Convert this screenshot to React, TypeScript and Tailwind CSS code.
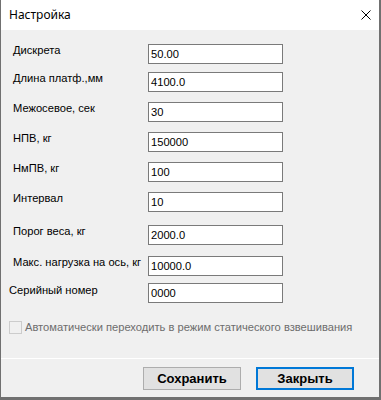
import React from "react";

const font = { fontFamily: '"Liberation Sans", Arial, sans-serif' };

function Field({ label, value }: { label: string; value: string }) {
  return (
    <div className="flex items-start">
      <div className="w-[135px] text-[11.15px] leading-[13px] text-black whitespace-nowrap">{label}</div>
      <div className="w-[135px] h-[20px] border border-[#7a7a7a] bg-white pl-[2px] text-[11.15px] leading-[18px] text-black">
        {value}
      </div>
    </div>
  );
}

export default function App() {
  return (
    <div
      className="w-[381px] h-[400px] bg-[#f0f0f0] border-l border-r-2 border-b-[3px] border-[#707070] flex flex-col overflow-hidden"
      style={font}
    >
      <div className="h-[30px] bg-white flex items-center justify-between pl-[8px] pr-[8px] shrink-0">
        <span className="text-[12px] text-black" style={{ fontFamily: '"Noto Sans", "Open Sans", sans-serif' }}>
          Настройка
        </span>
        <svg width="10" height="10" viewBox="0 0 10 10">
          <path d="M0.5 0.5 L9.5 9.5 M9.5 0.5 L0.5 9.5" stroke="#000" strokeWidth="1" fill="none" />
        </svg>
      </div>
      <div className="h-[328px] shrink-0 pl-[12px] pt-[14px] flex flex-col">
        <Field label="Дискрета" value="50.00" />
        <div className="mt-[8px]"><Field label="Длина платф.,мм" value="4100.0" /></div>
        <div className="mt-[10px]"><Field label="Межосевое, сек" value="30" /></div>
        <div className="mt-[10px]"><Field label="НПВ, кг" value="150000" /></div>
        <div className="mt-[10px]"><Field label="НмПВ, кг" value="100" /></div>
        <div className="mt-[10px]"><Field label="Интервал" value="10" /></div>
        <div className="mt-[13px]"><Field label="Порог веса, кг" value="2000.0" /></div>
        <div className="mt-[11px]"><Field label="Макс. нагрузка на ось, кг" value="10000.0" /></div>
        <div className="mt-[7px] -ml-[4px]">
          <div className="flex items-start">
            <div className="w-[139px] text-[11.15px] leading-[13px] text-black pt-[1px]">Серийный номер</div>
            <div className="w-[135px] h-[20px] border border-[#7a7a7a] bg-white pl-[2px] text-[11.15px] leading-[18px] text-black">
              0000
            </div>
          </div>
        </div>
        <div className="mt-[18px] -ml-[4px] flex items-center">
          <div className="w-[13px] h-[13px] border border-[#cccccc] bg-[#f0f0f0]" />
          <span className="ml-[3px] text-[11.15px] leading-[13px] text-[#6d6d6d] whitespace-nowrap">
            Автоматически переходить в режим статического взвешивания
          </span>
        </div>
      </div>
      <div className="h-[1px] bg-white shrink-0" />
      <div className="h-[38px] shrink-0 flex justify-end items-start pt-[8px] pr-[25px] gap-[15px]">
        <button className="w-[98px] h-[23px] bg-[#e1e1e1] border border-[#adadad] text-[13px] font-bold text-black leading-none">
          Сохранить
        </button>
        <button className="w-[98px] h-[23px] bg-[#e1e1e1] border-2 border-[#0078d7] text-[13px] font-bold text-black leading-none">
          Закрыть
        </button>
      </div>
    </div>
  );
}
